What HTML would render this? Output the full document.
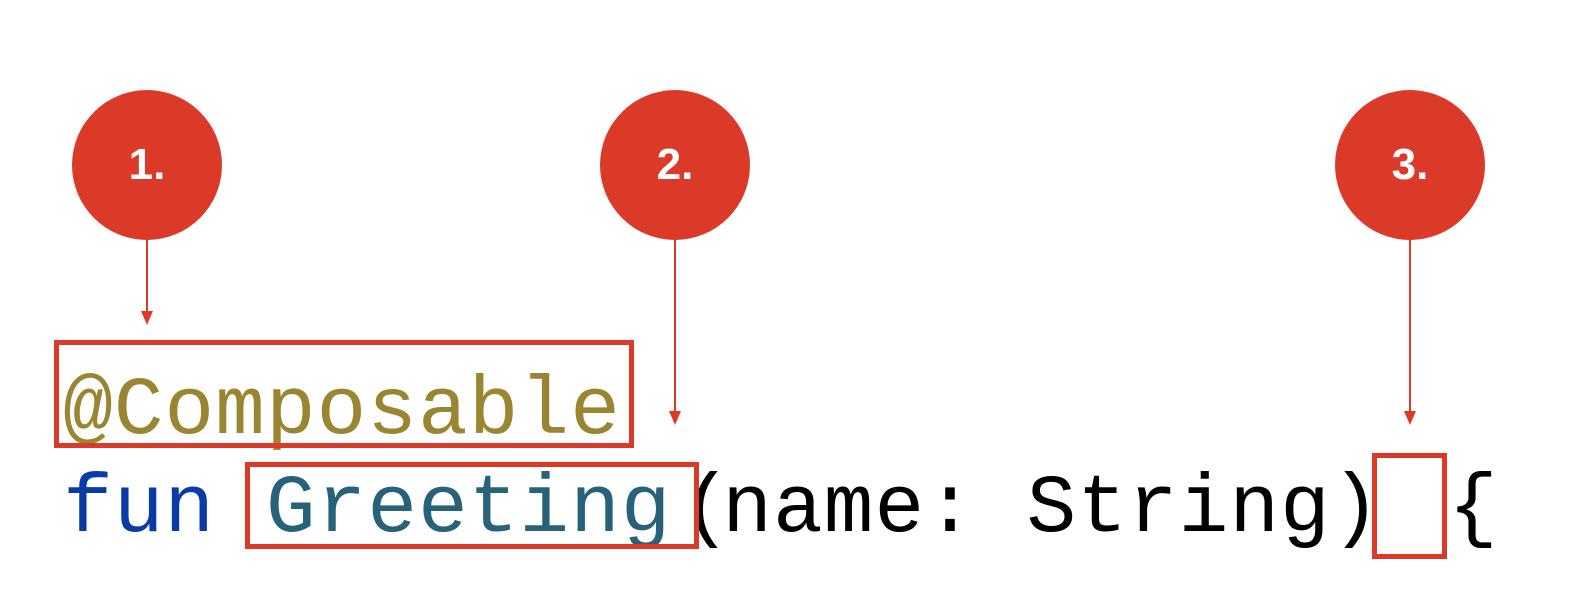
<!DOCTYPE html>
<html><head><style>
body{margin:0;width:1570px;height:612px;background:#fff;position:relative;overflow:hidden;font-family:"Liberation Mono",monospace}
.c{position:absolute;width:150px;height:150px;border-radius:50%;background:#dc3a28;color:#fff;font:bold 44px "Liberation Sans",sans-serif;display:flex;align-items:center;justify-content:center}
.l{position:absolute;width:2px;background:#dc3a28}
.a{position:absolute;width:0;height:0;border-left:6px solid transparent;border-right:6px solid transparent;border-top:14px solid #dc3a28}
.b{position:absolute;border:5px solid #dc3a28;box-sizing:border-box}
.t{position:absolute;left:63px;font-size:83px;letter-spacing:0.9px;white-space:pre;line-height:1}
.s{position:relative}
</style></head><body>
<div class="c" style="left:72px;top:90px">1.</div>
<div class="c" style="left:600px;top:90px">2.</div>
<div class="c" style="left:1335px;top:90px">3.</div>
<div class="l" style="left:146px;top:238px;height:76px"></div><div class="a" style="left:141px;top:311px"></div>
<div class="l" style="left:674px;top:238px;height:176px"></div><div class="a" style="left:669px;top:411px"></div>
<div class="l" style="left:1409px;top:238px;height:176px"></div><div class="a" style="left:1404px;top:411px"></div>
<div class="t" style="top:370px;color:#9a8530">@Composable</div>
<div class="t" style="top:468px;color:#000"><span style="color:#0a3aa8">fun</span> <span style="color:#28627a">Greeting</span><span class="s" style="left:10px">(</span>name: String) <span class="s" style="left:16px">{</span></div>
<div class="b" style="left:54px;top:340px;width:580px;height:108px"></div>
<div class="b" style="left:245px;top:462px;width:454px;height:87px"></div>
<div class="b" style="left:1372px;top:453px;width:75px;height:106px"></div>
</body></html>
